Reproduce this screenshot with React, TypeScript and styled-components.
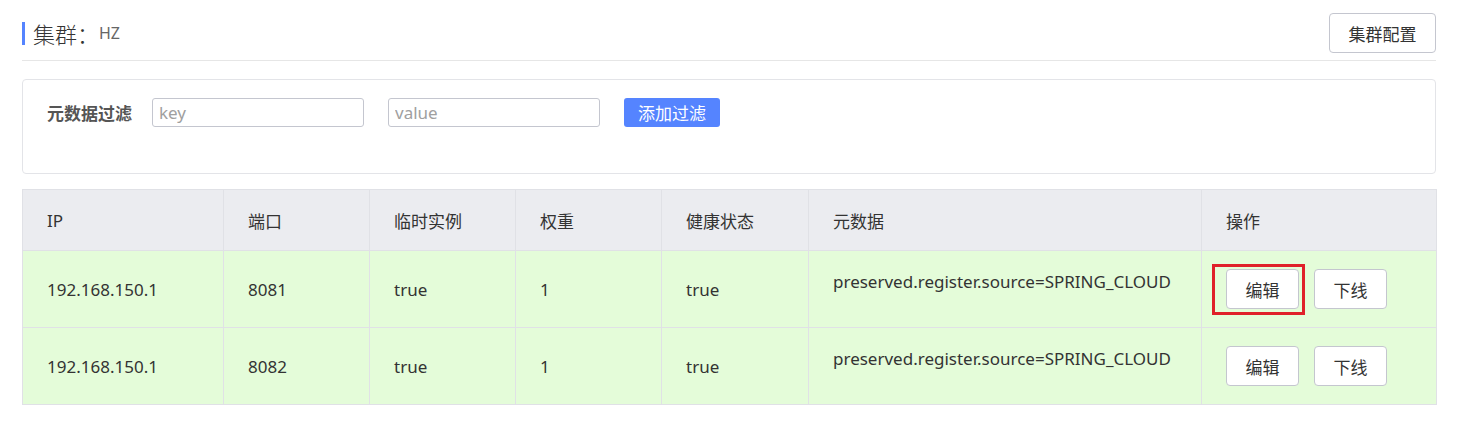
import React from "react";
import styled, { createGlobalStyle } from "styled-components";

const GlobalStyle = createGlobalStyle`
  body {
    margin: 0;
    background: #ffffff;
    font-family: "Noto Sans", "Noto Sans CJK SC", sans-serif;
    color: #333333;
  }
`;

const COLUMNS = [
  { title: "IP", width: 201 },
  { title: "端口", width: 146 },
  { title: "临时实例", width: 146 },
  { title: "权重", width: 146 },
  { title: "健康状态", width: 147 },
  { title: "元数据", width: 393 },
  { title: "操作", width: 235 },
];

const INSTANCES = [
  { ip: "192.168.150.1", port: 8081, ephemeral: "true", weight: 1, healthy: "true", meta: "preserved.register.source=SPRING_CLOUD", marked: true },
  { ip: "192.168.150.1", port: 8082, ephemeral: "true", weight: 1, healthy: "true", meta: "preserved.register.source=SPRING_CLOUD", marked: false },
];

export default function App() {
  return (
    <>
      <GlobalStyle />
      <div.page>
        <div.header>
          <div.title>
            <span className="bar" />
            <span className="name">集群：</span>
            <span className="cluster">HZ</span>
          </div.title>
          <Button>集群配置</Button>
        </div.header>

        <div.filter>
          <span className="label">元数据过滤</span>
          <Input placeholder="key" />
          <Input placeholder="value" />
          <PrimaryButton>添加过滤</PrimaryButton>
        </div.filter>

        <Table>
          <colgroup>
            {COLUMNS.map((c) => (
              <col key={c.title} style={{ width: c.width }} />
            ))}
          </colgroup>
          <thead>
            <tr>
              {COLUMNS.map((c) => (
                <Th key={c.title}>{c.title}</Th>
              ))}
            </tr>
          </thead>
          <tbody>
            {INSTANCES.map((row) => (
              <tr key={row.port}>
                <Td>{row.ip}</Td>
                <Td>{row.port}</Td>
                <Td>{row.ephemeral}</Td>
                <Td>{row.weight}</Td>
                <Td>{row.healthy}</Td>
                <Td>
                  <MetaText>{row.meta}</MetaText>
                </Td>
                <Td>
                  <div.actions>
                    <Marked $on={row.marked}>
                      <Button $small>编辑</Button>
                    </Marked>
                    <Button $small>下线</Button>
                  </div.actions>
                </Td>
              </tr>
            ))}
          </tbody>
        </Table>
      </div.page>
    </>
  );
}

const Button = styled.button<{ $small?: boolean }>`
  height: 40px;
  width: ${(p) => (p.$small ? "73px" : "107px")};
  padding: 0;
  background: #ffffff;
  border: 1px solid #c4c6cf;
  border-radius: 4px;
  font-family: "Noto Sans CJK SC", sans-serif;
  font-size: 17px;
  color: #333333;
  cursor: pointer;
`;

const PrimaryButton = styled.button`
  height: 29px;
  width: 96px;
  padding: 0;
  margin-left: 24px;
  background: #5584ff;
  border: none;
  border-radius: 3px;
  font-family: "Noto Sans CJK SC", sans-serif;
  font-size: 17px;
  color: #ffffff;
  cursor: pointer;
`;

const Input = styled.input`
  box-sizing: border-box;
  width: 212px;
  height: 29px;
  margin-left: 24px;
  padding: 0 6px;
  border: 1px solid #c4c6cf;
  border-radius: 3px;
  font-family: "Noto Sans", sans-serif;
  font-size: 17px;
  color: #333333;
  &:first-of-type {
    margin-left: 20px;
  }
  &::placeholder {
    color: #a0a0a0;
  }
`;

const Table = styled.table`
  width: 1414px;
  margin-top: 15px;
  border-collapse: collapse;
  table-layout: fixed;
  border: 1px solid #e3e4e8;
  font-size: 17px;
`;

const Th = styled.th`
  height: 60px;
  padding: 0 24px;
  text-align: left;
  font-weight: 400;
  background: #ebecf0;
  border: 1px solid #e0e1e6;
  color: #333333;
`;

const Td = styled.td`
  height: 76px;
  padding: 0 24px;
  background: #e4fcd9;
  border: 1px solid #e0e1e6;
  color: #333333;
  white-space: nowrap;
`;

const MetaText = styled.div`
  margin-bottom: 16px;
`;

const Marked = styled.span<{ $on: boolean }>`
  position: relative;
  display: inline-flex;
  &::after {
    content: "";
    display: ${(p) => (p.$on ? "block" : "none")};
    position: absolute;
    left: -14px;
    top: -5px;
    width: 93px;
    height: 51px;
    box-sizing: border-box;
    border: 3px solid #e0202a;
    pointer-events: none;
  }
`;

const div = {
  page: styled.div`
    padding: 13px 29px 20px 22px;
  `,
  header: styled.div`
    display: flex;
    justify-content: space-between;
    align-items: center;
    padding-bottom: 7px;
    border-bottom: 1px solid #e6e6e6;
  `,
  title: styled.div`
    display: flex;
    align-items: center;
    .bar {
      width: 3px;
      height: 23px;
      background: #5584ff;
      margin-right: 8px;
    }
    .name {
      font-family: "Noto Sans CJK SC", sans-serif;
      font-size: 22px;
      font-weight: 300;
      color: #333333;
    }
    .cluster {
      margin-left: 0;
      font-size: 16px;
      color: #666666;
    }
  `,
  filter: styled.div`
    display: flex;
    align-items: flex-start;
    height: 95px;
    margin-top: 18px;
    padding: 18px 24px 0;
    box-sizing: border-box;
    border: 1px solid #e3e4e8;
    border-radius: 4px;
    .label {
      line-height: 29px;
      font-family: "Noto Sans CJK SC", sans-serif;
      font-size: 17px;
      font-weight: 700;
      color: #555555;
    }
  `,
  actions: styled.div`
    display: flex;
    align-items: center;
    gap: 15px;
  `,
};
